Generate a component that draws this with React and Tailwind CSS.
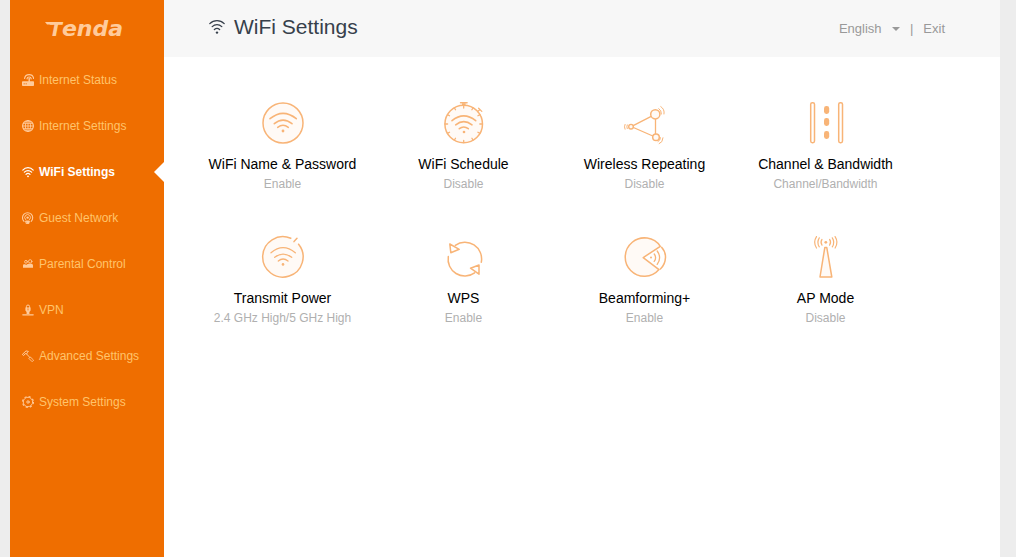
import React, { useState } from 'react';

const MENU = [
  { id: 'status', label: 'Internet Status', icon: RouterIcon },
  { id: 'internet', label: 'Internet Settings', icon: GlobeIcon },
  { id: 'wifi', label: 'WiFi Settings', icon: WifiIcon },
  { id: 'guest', label: 'Guest Network', icon: GuestIcon },
  { id: 'parental', label: 'Parental Control', icon: ParentalIcon },
  { id: 'vpn', label: 'VPN', icon: VpnIcon },
  { id: 'advanced', label: 'Advanced Settings', icon: HammerIcon },
  { id: 'system', label: 'System Settings', icon: GearIcon },
];

const TILES = [
  { title: 'WiFi Name & Password', status: 'Enable', icon: NameIcon },
  { title: 'WiFi Schedule', status: 'Disable', icon: ScheduleIcon },
  { title: 'Wireless Repeating', status: 'Disable', icon: RepeatingIcon },
  { title: 'Channel & Bandwidth', status: 'Channel/Bandwidth', icon: ChannelIcon },
  { title: 'Transmit Power', status: '2.4 GHz High/5 GHz High', icon: PowerIcon },
  { title: 'WPS', status: 'Enable', icon: WpsIcon },
  { title: 'Beamforming+', status: 'Enable', icon: BeamIcon },
  { title: 'AP Mode', status: 'Disable', icon: ApIcon },
];

/* ---- sidebar icons, 12px ---- */

function SmallIcon({ children }) {
  return (
    <svg className="size-3 shrink-0" viewBox="0 0 12 12" fill="none" stroke="currentColor" strokeLinecap="round" aria-hidden="true">
      {children}
    </svg>
  );
}

function RouterIcon() {
  return (
    <SmallIcon>
      <path d="M2.6 4.4C3.4 -.6 10.8 -.6 11.6 4.4M5 4.8C5.4 2.4 8.8 2.4 9.2 4.8" strokeWidth="1.2" />
      <path d="M7.2 4.5V8" strokeWidth="1.4" />
      <rect x="0" y="7.2" width="12" height="4.8" rx="0.8" fill="currentColor" stroke="none" />
      <path d="M2 9.8h.4M4 9.8h.4" stroke="#ef6e00" strokeWidth="0.9" />
    </SmallIcon>
  );
}

function GlobeIcon() {
  return (
    <SmallIcon>
      <circle cx="6" cy="6" r="5.4" strokeWidth="1.2" />
      <ellipse cx="6" cy="6" rx="2.6" ry="5.4" strokeWidth="0.9" />
      <path d="M6 .6v10.8M.6 6h10.8M1.5 3.3h9M1.5 8.7h9" strokeWidth="0.9" />
    </SmallIcon>
  );
}

function WifiIcon() {
  return (
    <SmallIcon>
      <path d="M.8 4.1C3.6 .9 8.4 .9 11.2 4.1M2.4 6.2C4.5 4 7.5 4 9.6 6.2M4 8.3C5.2 7.1 6.8 7.1 8 8.3" strokeWidth="1.2" />
      <circle cx="6" cy="10.3" r="0.9" fill="currentColor" stroke="none" />
    </SmallIcon>
  );
}

function GuestIcon() {
  return (
    <SmallIcon>
      <path d="M2 9.4A5.1 5.1 0 1 1 9.2 9.4" strokeWidth="1.1" />
      <path d="M3.6 7.6A2.9 2.9 0 1 1 7.6 7.6" strokeWidth="1" />
      <circle cx="5.6" cy="5.6" r="1.2" fill="currentColor" stroke="none" />
      <path d="M4 9h3.4L6.8 11.6H4.6z" fill="currentColor" strokeLinejoin="round" />
    </SmallIcon>
  );
}

function ParentalIcon() {
  return (
    <SmallIcon>
      <circle cx="4" cy="3.8" r="1.4" strokeWidth="0.9" />
      <circle cx="8.2" cy="3.4" r="1.7" strokeWidth="0.9" />
      <path d="M1 9.8V7.4C1 6 2.4 5.8 3.6 6.6 4.6 7.2 5.2 6.2 6.4 5.8h3.2c1 .2 1.4 1 1.4 2v2z" fill="currentColor" stroke="none" />
    </SmallIcon>
  );
}

function VpnIcon() {
  return (
    <SmallIcon>
      <path d="M4.4 3.6V2.6a1.6 1.6 0 0 1 3.2 0v1" strokeWidth="1" />
      <path d="M3.4 3.4h5.2v3.2L7.4 8v2H4.6V8L3.4 6.6z" fill="currentColor" stroke="none" />
      <path d="M6 4.8v1.2" stroke="#ef6e00" strokeWidth="0.8" />
      <path d="M.8 10.8h10.4" strokeWidth="1.2" />
    </SmallIcon>
  );
}

function HammerIcon() {
  return (
    <SmallIcon>
      <path d="M.6 4.2 4 .9 6.4 1.4 5.2 2.8 4.6 4 3.2 3.6 1.8 5.3z" strokeWidth="1" strokeLinejoin="round" />
      <path d="M4.6 4 8 7.6" strokeWidth="1" />
      <path d="M7.2 8.2 8.4 7 11.6 10.2 10.4 11.4z" strokeWidth="0.9" strokeLinejoin="round" />
    </SmallIcon>
  );
}

function GearIcon() {
  return (
    <SmallIcon>
      <circle cx="6" cy="6" r="4.7" strokeWidth="0.9" />
      <circle cx="6" cy="6" r="5.4" strokeWidth="1.2" strokeDasharray="2.1 2.14" strokeLinecap="butt" />
      <circle cx="6" cy="6" r="1.2" strokeWidth="1" />
    </SmallIcon>
  );
}

/* ---- tile icons, 48px ---- */

function TileIcon({ children }) {
  return (
    <svg className="size-12 text-[#f8b477]" viewBox="0 0 48 48" fill="none" stroke="currentColor" strokeWidth="1.5" strokeLinecap="round" strokeLinejoin="round" aria-hidden="true">
      {children}
    </svg>
  );
}

function NameIcon() {
  return (
    <TileIcon>
      <circle cx="24" cy="24" r="20" fill="#fffaf6" />
      <path d="M11 19.7Q24 9 37.3 19.7M15.3 24.7Q24 17.5 33 24.7M18.7 28.3Q24 24.3 29.3 28.3" strokeWidth="1.6" />
      <circle cx="24" cy="32" r="1.4" fill="currentColor" stroke="none" />
    </TileIcon>
  );
}

function ScheduleIcon() {
  return (
    <TileIcon>
      <circle cx="23.7" cy="25" r="18.8" fill="#fffaf6" />
      <path d="M20.5 3.7h6.6" strokeWidth="1.4" />
      <path d="M22 4.2h3.6v2.4H22z" fill="currentColor" stroke="none" />
      <path d="M38.6 9.3 41.8 12.4M37.6 12.6 40.2 10.6" strokeWidth="1.3" />
      <path d="M23.7 6v3M33.1 8.7 31.9 10.8M14.3 8.7l1.2 2.1M40 15.6l-2.1 1.2M7.4 15.6l2.1 1.2M42.4 25h-2.6M5 25h2.6M40 34.4l-2.1-1.2M7.4 34.4l2.1-1.2M33.1 41.3l-1.2-2.1M14.3 41.3l1.2-2.1M23.7 43.6v-2.2" strokeWidth="1.3" />
      <path d="M12 21.7Q23.7 12 35.7 21.7M15.7 25.8Q23.7 19.5 32 25.8M19.3 29.7Q23.7 26.3 28.3 29.7" strokeWidth="1.6" />
      <circle cx="24" cy="33" r="1.3" fill="currentColor" stroke="none" />
    </TileIcon>
  );
}

function RepeatingIcon() {
  return (
    <TileIcon>
      <path d="M12.2 26.7 30.2 17.3M12.4 28.5 31.8 37M34.5 19.8v15.2" strokeWidth="1.3" />
      <circle cx="34.3" cy="15.3" r="4.6" fill="#fffaf6" strokeWidth="1.5" />
      <circle cx="35" cy="38.3" r="3.3" fill="#fffaf6" strokeWidth="1.5" />
      <circle cx="10" cy="27.7" r="2.3" fill="#fffaf6" strokeWidth="1.4" />
      <path d="M37.8 9.6Q40.6 11.4 40.4 15M39.8 7.6Q43.9 10.2 43 15" strokeWidth="1" />
      <path d="M39.5 38.7Q39.4 41.5 37 42.6M42 38.8Q41.8 43.6 38.2 44.7" strokeWidth="1" />
      <path d="M6.2 25.9Q5.4 27.8 6.2 29.6M4 25.4Q2.8 27.8 4 30.2" strokeWidth="1" />
    </TileIcon>
  );
}

function ChannelIcon() {
  return (
    <TileIcon>
      <rect x="8.7" y="3.7" width="3.8" height="40" rx="1.6" />
      <rect x="36.7" y="3.7" width="3.8" height="40" rx="1.6" />
      <g fill="currentColor" stroke="none">
        <rect x="22" y="7" width="5.2" height="8" rx="2.4" />
        <rect x="22" y="19" width="5.2" height="8" rx="2.4" />
        <rect x="22" y="32" width="5.2" height="8" rx="2.4" />
      </g>
    </TileIcon>
  );
}

function PowerIcon() {
  return (
    <TileIcon>
      <circle cx="24" cy="24" r="19.6" fill="#fffaf6" stroke="none" />
      <path d="M31.8 5.3A20.2 20.2 0 1 0 39.6 11.2" />
      <path d="M35 8.6 38 5.2" />
      <path d="M12 19.8Q24 9.6 36.3 19.8M15.7 24.3Q24 18 32.7 24.3M19.3 28Q24 24 29 28" strokeWidth="1.3" />
      <circle cx="24" cy="31.4" r="1.3" fill="currentColor" stroke="none" />
    </TileIcon>
  );
}

function WpsIcon() {
  return (
    <TileIcon>
      <path d="M15.3 12.3A16.7 16.7 0 0 1 41.3 29.2" />
      <path d="M8.3 23.6A16.7 16.7 0 0 0 34.6 39.8" />
      <path d="M9.8 11 19.2 16.3 10.8 19.7z" />
      <path d="M30.5 35.2 39 32v9.2z" />
    </TileIcon>
  );
}

function BeamIcon() {
  return (
    <TileIcon>
      <path d="M39.3 13.3A19.2 19.2 0 1 0 38 36.6L22.2 24.6z" fill="#fffaf6" />
      <path d="M40.6 14.2Q44.6 18.6 44.5 24.4 44.2 31.6 39.4 36" />
      <circle cx="30" cy="24.6" r="1" fill="currentColor" stroke="none" />
      <path d="M33.2 21Q36 24.6 33.2 28.4M36.2 18Q41 24.6 36.2 31.4" strokeWidth="1.3" />
    </TileIcon>
  );
}

function ApIcon() {
  return (
    <TileIcon>
      <path d="M22.8 14.6h2L29.8 44H18z" fill="#fffaf6" />
      <circle cx="23.8" cy="9.3" r="1.4" fill="currentColor" stroke="none" />
      <path d="M20 6.4Q18 9.3 20 12.2M17.3 4.8Q14.4 9.3 17.3 13.8M14.5 3.6Q10.8 9.3 14.5 15" strokeWidth="1.2" />
      <path d="M27.6 6.4Q29.6 9.3 27.6 12.2M30.3 4.8Q33.2 9.3 30.3 13.8M33.1 3.6Q36.8 9.3 33.1 15" strokeWidth="1.2" />
    </TileIcon>
  );
}

const Sidebar = ({ active, onSelect }) => (
  <aside className="w-[154px] shrink-0 bg-[#ef6e00]">
    <div className="flex h-[57px] items-center justify-center pr-1.5 font-['DejaVu_Sans',sans-serif] font-bold italic text-[#ffcb9b]">
      <div className="flex items-baseline leading-none">
        {/* long left arm of the T */}
        <svg className="-mr-1 h-3.5 w-2" viewBox="0 0 8 14" fill="currentColor" aria-hidden="true">
          <path d="M0 0h8v2.6H2z" />
        </svg>
        <span className="text-[19px]">T</span>
        <span className="text-[22px]">enda</span>
      </div>
    </div>
    <nav>
      {MENU.map(({ id, label, icon: Icon }) => (
        <a
          key={id}
          href={`#${id}`}
          onClick={() => onSelect(id)}
          className={`relative flex h-[46px] items-center gap-[5px] pl-3 text-xs ${
            active === id ? 'font-bold text-white' : 'text-[#ffc46b]'
          }`}
        >
          <span className={active === id ? 'text-white' : 'text-[#ffcb9b]'}>
            <Icon />
          </span>
          {label}
          {active === id && (
            <svg className="absolute right-0 top-1/2 h-5 w-2.5 -translate-y-1/2" viewBox="0 0 10 20" aria-hidden="true">
              <path d="M10 0v20L0 10z" fill="#fff" />
            </svg>
          )}
        </a>
      ))}
    </nav>
  </aside>
);

const Header = ({ title }) => (
  <header className="flex h-[57px] items-center justify-between bg-[#f7f7f7] pl-[45px] pr-[55px]">
    <h1 className="flex items-center gap-[9px] pb-1 text-[21px] text-[#363f4b]">
      <svg className="size-4" viewBox="0 0 16 16" fill="none" stroke="currentColor" strokeLinecap="round" strokeWidth="1.3" aria-hidden="true">
        <path d="M.8 4.6C4.8 .6 11.2 .6 15.2 4.6M3.2 7.6C6 4.9 10 4.9 12.8 7.6M5.4 10.5C7 9.1 9 9.1 10.6 10.5" />
        <circle cx="8" cy="13.6" r="1.2" fill="currentColor" stroke="none" />
      </svg>
      {title}
    </h1>
    <div className="flex items-center text-[13px] leading-5 text-[#999]">
      <div className="grid items-center">
        <select aria-label="Language" className="col-start-1 row-start-1 h-5 appearance-none pr-[18px] outline-none">
          <option>English</option>
        </select>
        <svg className="pointer-events-none col-start-1 row-start-1 h-1 w-2 justify-self-end" viewBox="0 0 8 4" fill="currentColor" aria-hidden="true">
          <path d="M0 0h8L4 4z" />
        </svg>
      </div>
      <span className="px-2.5">|</span>
      <a href="#exit">Exit</a>
    </div>
  </header>
);

const App = () => {
  const [active, setActive] = useState('wifi');

  return (
    <div className="flex min-h-screen bg-[#ededed] pl-2.5 pr-4 font-['Liberation_Sans',Arial,sans-serif]">
      <Sidebar active={active} onSelect={setActive} />
      <div className="min-w-0 flex-1 bg-white">
        <Header title={MENU.find((m) => m.id === active).label} />
        <main className="grid grid-cols-4 gap-y-[38px] pl-7 pr-[84px] pt-[42px]">
          {TILES.map(({ title, status, icon: Icon }) => (
            <button key={title} type="button" className="flex cursor-pointer flex-col items-center">
              <Icon />
              <span className="mt-[7px] text-sm text-black">{title}</span>
              <span className="text-xs leading-[21px] text-[#b0b0b0]">{status}</span>
            </button>
          ))}
        </main>
      </div>
    </div>
  );
};

export default App;
